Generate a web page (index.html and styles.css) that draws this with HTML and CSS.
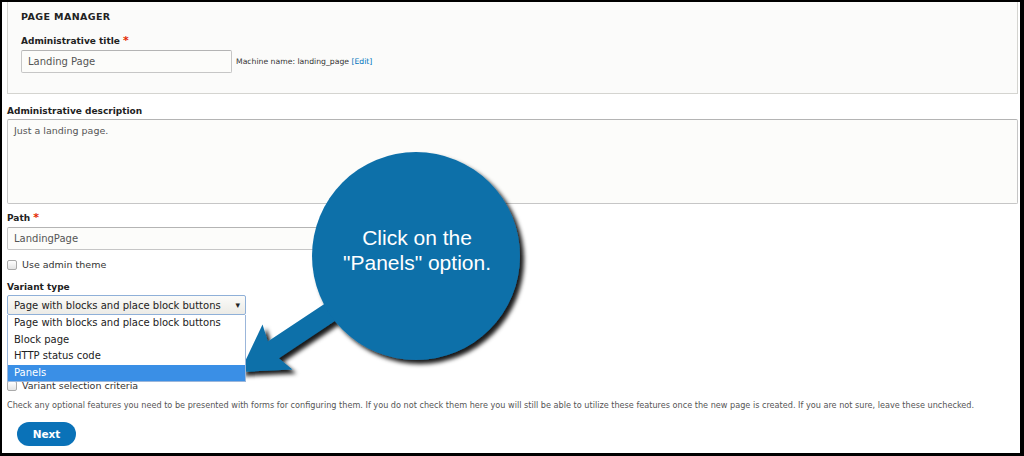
FILE: index.html
```html
<!DOCTYPE html>
<html lang="en">
<head>
  <meta charset="UTF-8">
  <meta name="viewport" content="width=device-width, initial-scale=1.0">
  <title>Page Manager</title>
  <link rel="stylesheet" href="styles.css">
</head>
<body>
  <div class="page">
    <fieldset class="manager">
      <h4 class="legend">Page manager</h4>
      <label class="label">Administrative title <span class="req">*</span></label>
      <div class="title-row">
        <input class="text-input short" type="text" value="Landing Page">
        <span class="machine">Machine name: landing_page <a href="#">[Edit]</a></span>
      </div>
    </fieldset>

    <label class="label">Administrative description</label>
    <textarea class="textarea">Just a landing page.</textarea>

    <label class="label">Path <span class="req">*</span></label>
    <input class="text-input path" type="text" value="LandingPage">

    <div class="check"><span class="box"></span>Use admin theme</div>

    <label class="label">Variant type</label>
    <div class="select-wrap">
      <div class="select">Page with blocks and place block buttons <span class="caret">&#9662;</span></div>
      <ul class="dropdown">
        <li>Page with blocks and place block buttons</li>
        <li>Block page</li>
        <li>HTTP status code</li>
        <li class="active">Panels</li>
      </ul>
    </div>

    <div class="check criteria"><span class="box"></span>Variant selection criteria</div>

    <p class="help">Check any optional features you need to be presented with forms for configuring them. If you do not check them here you will still be able to utilize these features once the new page is created. If you are not sure, leave these unchecked.</p>

    <button class="next">Next</button>
  </div>

  <svg class="callout" width="1024" height="456" viewBox="0 0 1024 456">
    <defs>
      <filter id="shadow" x="-20%" y="-20%" width="140%" height="140%">
        <feDropShadow dx="4" dy="4" stdDeviation="2" flood-color="#000" flood-opacity="0.9"/>
      </filter>
    </defs>
    <g filter="url(#shadow)" fill="#0b6fa9">
      <g transform="translate(240 372) rotate(-33.6)">
        <polygon points="0,0 45,-27 40,-10 150,-10 150,10 40,10 45,27"/>
      </g>
      <circle cx="416" cy="256" r="104"/>
    </g>
    <text class="callout-text" x="417" y="245">Click on the</text>
    <text class="callout-text" x="417" y="270">"Panels" option.</text>
  </svg>
</body>
</html>
```
FILE: styles.css
```css
body {
  margin: 0;
  background: #000;
  font-family: "DejaVu Sans", Verdana, sans-serif;
  color: #333;
  position: relative;
  height: 456px;
  overflow: hidden;
}

.page {
  background: #fff;
  margin: 2px 4px 0 2px;
  height: 451px;
  padding: 0 2px 0 5px;
  overflow: hidden;
}

.manager {
  margin: -4px 0 0 0;
  padding: 12px 14px 0 13px;
  height: 82px;
  background: #fbfbfa;
  border: 1px solid #d4d4d0;
  border-top-color: #ddd;
}

.legend {
  margin: 0 0 12px 0;
  font-size: 9.5px;
  font-weight: bold;
  text-transform: uppercase;
  letter-spacing: 0.4px;
  color: #222;
}

.label {
  display: block;
  font-size: 9px;
  font-weight: bold;
  color: #222;
  margin-bottom: 3px;
}

.req {
  color: #e32700;
  font-size: 11px;
}

.title-row {
  display: flex;
  align-items: center;
  gap: 4px;
}

.text-input {
  box-sizing: border-box;
  height: 23px;
  font-family: inherit;
  font-size: 10px;
  color: #555;
  padding: 0 6px;
  border: 1px solid #c6c6c6;
  border-top-color: #b4b4b4;
  border-radius: 2px;
  background: #fcfcfa;
}

.short {
  width: 211px;
}

.machine {
  font-size: 7.7px;
  color: #333;
}

.machine a {
  color: #0074bd;
  text-decoration: none;
}

.page > .label:first-of-type {
  margin-top: 12px;
}

.textarea {
  display: block;
  box-sizing: border-box;
  width: 100%;
  height: 85px;
  resize: none;
  font-family: inherit;
  font-size: 9.5px;
  color: #555;
  padding: 5px 6px;
  border: 1px solid #c6c6c6;
  border-top-color: #b4b4b4;
  border-radius: 2px;
  background: #fcfcfa;
  margin: 0 0 7px 0;
}

.path {
  display: block;
  width: 420px;
  margin-bottom: 9px;
}

.check {
  display: flex;
  align-items: center;
  gap: 5px;
  font-size: 9.5px;
  color: #333;
  margin-bottom: 12px;
}

.box {
  width: 8px;
  height: 8px;
  border: 1px solid #aaa;
  border-radius: 2px;
  background: linear-gradient(#fff, #e4e4e4);
}

.select-wrap {
  position: relative;
  width: 239px;
}

.select {
  box-sizing: border-box;
  height: 20px;
  display: flex;
  align-items: center;
  justify-content: space-between;
  padding: 0 5px 0 6px;
  font-size: 10px;
  color: #222;
  border: 1px solid #8fb0d8;
  border-radius: 2px;
  background: linear-gradient(#fbfbf9, #ecebe6);
}

.caret {
  font-size: 9px;
}

.dropdown {
  position: absolute;
  left: 0;
  top: 100%;
  width: 100%;
  box-sizing: border-box;
  margin: 0;
  padding: 0;
  list-style: none;
  background: #fff;
  border: 1px solid #9bb6da;
  border-top: none;
  z-index: 2;
}

.dropdown li {
  height: 16.5px;
  line-height: 16.5px;
  padding: 0 6px;
  font-size: 10px;
  color: #222;
}

.dropdown li.active {
  background: #3a8fe6;
  color: #fff;
}

.criteria {
  margin-top: 65px;
  margin-bottom: 0;
}

.help {
  margin: 9px 0 12px 0;
  font-size: 8.15px;
  color: #555;
  white-space: nowrap;
}

.next {
  margin-left: 10px;
  width: 59px;
  height: 24px;
  border: none;
  border-radius: 12px;
  background: #0a72b8;
  color: #fff;
  font-family: inherit;
  font-size: 10.5px;
  font-weight: bold;
}

.callout {
  position: absolute;
  left: 0;
  top: 0;
  pointer-events: none;
}

.callout-text {
  fill: #fff;
  font-family: "Liberation Sans", Arial, sans-serif;
  font-size: 21px;
  text-anchor: middle;
}
```
